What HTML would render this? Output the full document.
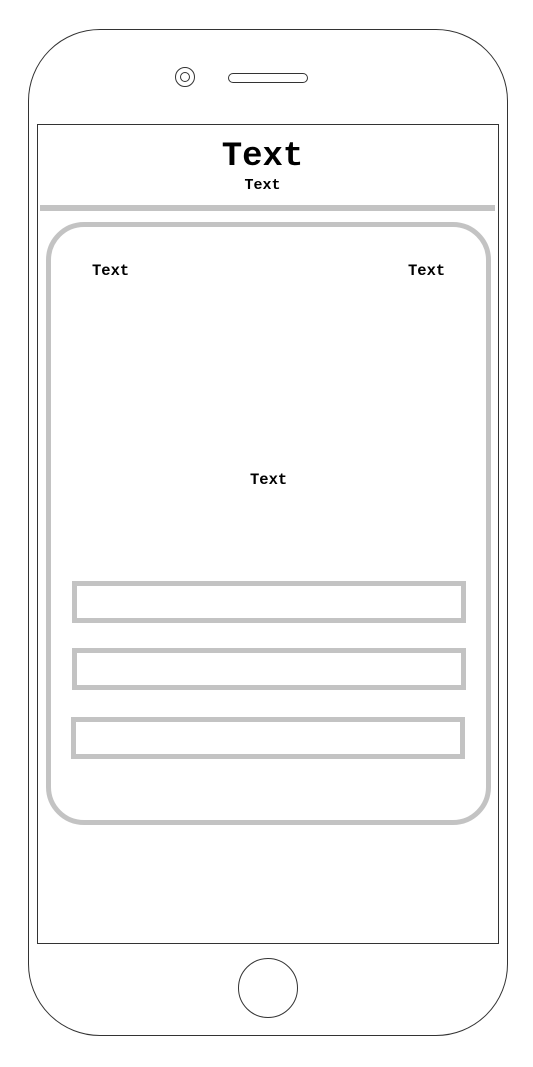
<!DOCTYPE html>
<html><head><style>
body{margin:0;width:533px;height:1067px;background:#fff;position:relative;overflow:hidden;font-family:"Liberation Mono",monospace;font-weight:bold;color:#000}
div{position:absolute;box-sizing:border-box}
.t{white-space:nowrap;line-height:1}
</style></head><body>
<div style="left:28px;top:29px;width:480px;height:1007px;border:1.5px solid #333;border-radius:72px"></div>
<div style="left:175px;top:67px;width:20px;height:20px;border:1.5px solid #333;border-radius:50%"></div>
<div style="left:180px;top:72px;width:10px;height:10px;border:1.5px solid #333;border-radius:50%"></div>
<div style="left:228px;top:73px;width:80px;height:10px;border:1.5px solid #333;border-radius:5px"></div>
<div style="left:37px;top:124px;width:462px;height:820px;border:1.5px solid #333"></div>
<div style="left:238px;top:958px;width:60px;height:60px;border:1.5px solid #333;border-radius:50%"></div>
<div class="t" style="left:0;width:525px;top:140px;text-align:center;font-size:34px">Text</div>
<div class="t" style="left:0;width:525px;top:178px;text-align:center;font-size:15px">Text</div>
<div style="left:40px;top:205px;width:455px;height:6px;background:#c3c3c3"></div>
<div style="left:46px;top:222px;width:445px;height:603px;border:5px solid #c3c3c3;border-radius:38px"></div>
<div class="t" style="left:92px;top:264px;font-size:15.5px">Text</div>
<div class="t" style="left:408px;top:264px;font-size:15.5px">Text</div>
<div class="t" style="left:250px;top:473px;font-size:15.5px">Text</div>
<div style="left:72px;top:581px;width:394px;height:42px;border:5px solid #c3c3c3"></div>
<div style="left:72px;top:648px;width:394px;height:42px;border:5px solid #c3c3c3"></div>
<div style="left:71px;top:717px;width:394px;height:42px;border:5px solid #c3c3c3"></div>
</body></html>
